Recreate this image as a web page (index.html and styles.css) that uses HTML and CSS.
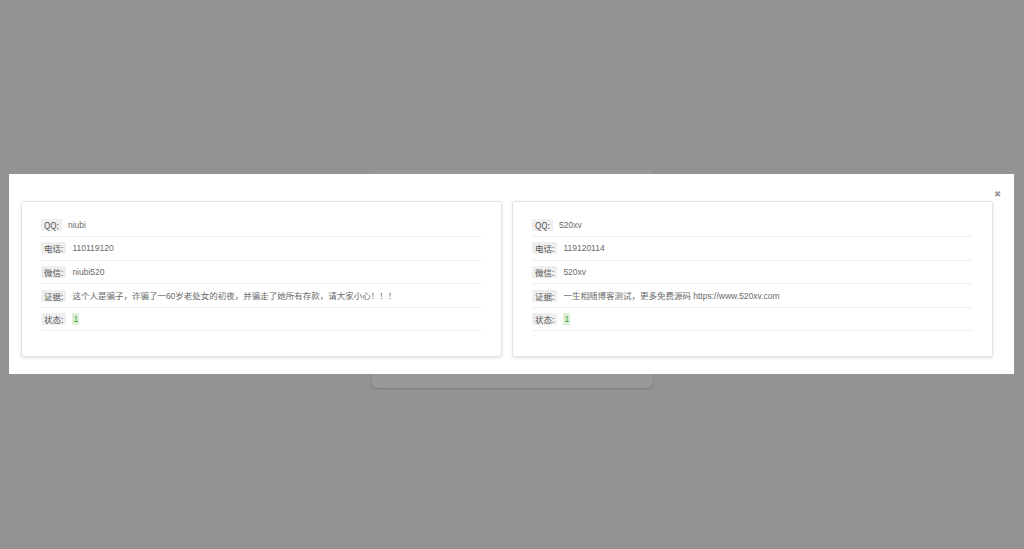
FILE: index.html
```html
<!DOCTYPE html>
<html lang="zh-CN">
<head>
<meta charset="utf-8">
<title>查询结果</title>
<link rel="stylesheet" href="styles.css">
</head>
<body>
<div class="page">
  <div class="under-panel"></div>
</div>
<div class="modal">
  <span class="close">&#x2716;</span>
  <div class="modal-body">
    <div class="card">
      <div class="row"><span class="label">QQ:</span><span class="value">niubi</span></div>
      <div class="row"><span class="label">电话:</span><span class="value">110119120</span></div>
      <div class="row"><span class="label">微信:</span><span class="value">niubi520</span></div>
      <div class="row"><span class="label">证据:</span><span class="value">这个人是骗子，诈骗了一60岁老处女的初夜，并骗走了她所有存款，请大家小心！！！</span></div>
      <div class="row"><span class="label">状态:</span><span class="status">1</span></div>
    </div>
    <div class="card">
      <div class="row"><span class="label">QQ:</span><span class="value">520xv</span></div>
      <div class="row"><span class="label">电话:</span><span class="value">119120114</span></div>
      <div class="row"><span class="label">微信:</span><span class="value">520xv</span></div>
      <div class="row"><span class="label">证据:</span><span class="value">一生相随博客测试，更多免费源码 https://www.520xv.com</span></div>
      <div class="row"><span class="label">状态:</span><span class="status">1</span></div>
    </div>
  </div>
</div>
</body>
</html>
```
FILE: styles.css
```css
html, body {
  margin: 0;
  padding: 0;
  height: 100%;
}
body {
  background: #939393;
  font-family: "Liberation Sans", Arial, "Noto Sans CJK SC", sans-serif;
  font-size: 8.5px;
  overflow: hidden;
}
.page {
  display: flex;
  justify-content: center;
  padding-top: 170px;
}
.under-panel {
  width: 281px;
  height: 218px;
  margin-left: 1px;
  background: #989898;
  border-radius: 5px;
  box-shadow: 0 1px 2px rgba(0,0,0,0.18);
}
.modal {
  position: absolute;
  left: 9px;
  top: 174px;
  width: 1005px;
  height: 200px;
  background: #fff;
  box-sizing: border-box;
}
.close {
  position: absolute;
  right: 13px;
  top: 15px;
  font-size: 8.5px;
  color: #9a9a9a;
  font-family: "DejaVu Sans", sans-serif;
  font-weight: bold;
}
.modal-body {
  display: flex;
  gap: 10px;
  padding: 27px 0 0 12px;
}
.card {
  width: 481px;
  box-sizing: border-box;
  height: 156px;
  padding: 11.5px 19px 0 19px;
  border: 1px solid #e2e2e2;
  border-radius: 3px;
  box-shadow: 0 1px 3px rgba(0,0,0,0.12);
}
.row {
  display: flex;
  align-items: center;
  height: 22.6px;
  border-bottom: 1px solid #efefef;
}
.label {
  background: #efefef;
  color: #555;
  padding: 1px 3px;
  margin-right: 6px;
  line-height: 10px;
  font-family: "Noto Sans CJK SC", "Liberation Sans", sans-serif;
}
.value {
  color: #6a6a6a;
  line-height: 10px;
  font-family: "Liberation Sans", "Noto Sans CJK SC", sans-serif;
}
.status {
  background: #dff0d8;
  color: #3c9a3c;
  padding: 1px 1px;
  line-height: 10px;
}
```
